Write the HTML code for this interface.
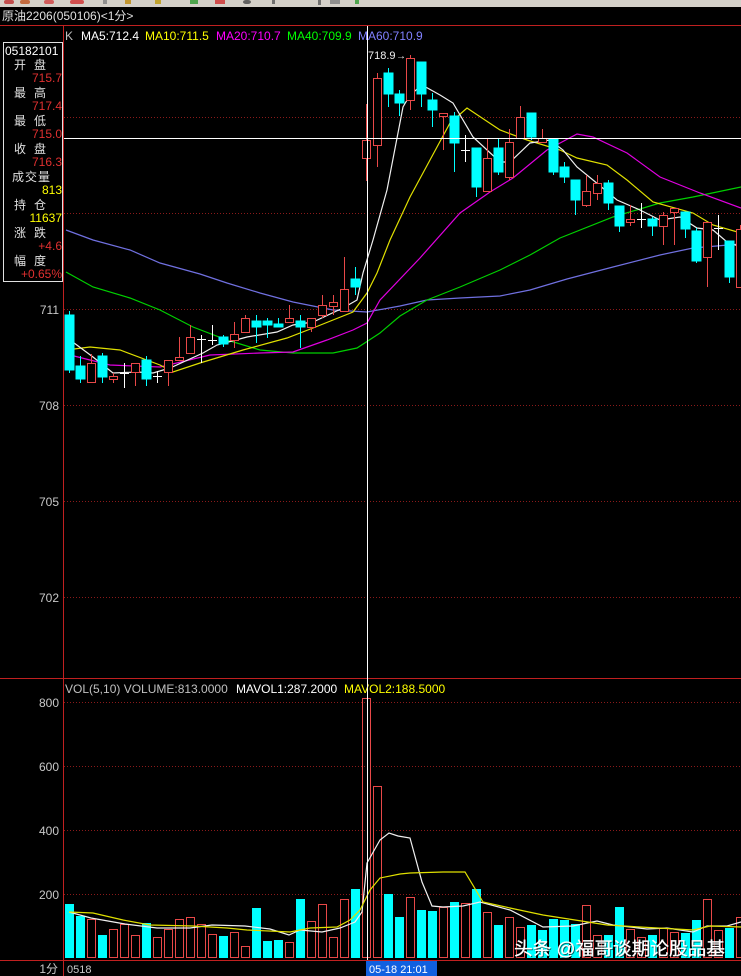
<!DOCTYPE html>
<html><head><meta charset="utf-8"><style>
html,body{margin:0;padding:0;background:#000;}
body{width:741px;height:976px;overflow:hidden;position:relative;font-family:"Liberation Sans","Noto Sans CJK SC",sans-serif;}
svg{position:absolute;left:0;top:0;}
text{font-family:"Liberation Sans","Noto Sans CJK SC",sans-serif;}
</style></head><body>
<svg width="741" height="976" viewBox="0 0 741 976" xmlns="http://www.w3.org/2000/svg">
<rect x="0" y="0" width="741" height="976" fill="#000"/>
<rect x="0" y="0" width="741" height="7" fill="#d4d0c8"/>
<g opacity="0.9">
<rect x="4" y="0" width="10" height="4" rx="2" fill="#c04040"/><rect x="20" y="0" width="10" height="4" rx="2" fill="#c06030"/>
<rect x="44" y="0" width="10" height="4" rx="2" fill="#d05050"/><rect x="70" y="0" width="14" height="4" rx="2" fill="#d04040"/>
<rect x="103" y="0" width="4" height="4" fill="#888"/><rect x="125" y="0" width="6" height="4" fill="#c09020"/>
<rect x="155" y="0" width="6" height="4" fill="#c0a020"/><rect x="190" y="0" width="8" height="4" fill="#40a040"/>
<rect x="215" y="0" width="10" height="4" fill="#d04040"/><rect x="243" y="0" width="8" height="4" rx="3" fill="#555"/>
<rect x="272" y="0" width="3" height="4" fill="#666"/><rect x="318" y="0" width="3" height="5" fill="#666"/>
<rect x="330" y="0" width="10" height="4" fill="#888"/><rect x="355" y="0" width="4" height="4" fill="#40a040"/>
</g>
<text x="2" y="20" fill="#e0e0e0" font-size="12">原油2206(050106)&lt;1分&gt;</text>
<line x1="0" y1="25.5" x2="741" y2="25.5" stroke="#c02020" stroke-width="1"/>
<line x1="63.5" y1="26" x2="63.5" y2="976" stroke="#c02020" stroke-width="1"/>
<line x1="0" y1="678.5" x2="741" y2="678.5" stroke="#c02020" stroke-width="1"/>
<line x1="0" y1="960.5" x2="741" y2="960.5" stroke="#c02020" stroke-width="1"/>
<g stroke="#8a1a1a" stroke-width="1" stroke-dasharray="1,2">
<line x1="64" y1="117.5" x2="741" y2="117.5"/><line x1="64" y1="213.5" x2="741" y2="213.5"/>
<line x1="64" y1="309.5" x2="741" y2="309.5"/><line x1="64" y1="405.5" x2="741" y2="405.5"/>
<line x1="64" y1="501.5" x2="741" y2="501.5"/><line x1="64" y1="597.5" x2="741" y2="597.5"/>
<line x1="64" y1="702.5" x2="741" y2="702.5"/><line x1="64" y1="766.5" x2="741" y2="766.5"/>
<line x1="64" y1="830.5" x2="741" y2="830.5"/><line x1="64" y1="894.5" x2="741" y2="894.5"/>
</g>
<g fill="#c8c8c8" font-size="12" text-anchor="end">
<text x="59" y="314">711</text><text x="59" y="410">708</text><text x="59" y="506">705</text><text x="59" y="602">702</text>
<text x="59" y="707">800</text><text x="59" y="771">600</text><text x="59" y="835">400</text><text x="59" y="899">200</text>
</g>
<g font-size="12">
<text x="65" y="40" fill="#c0c0c0">K</text>
<text x="81" y="40" fill="#ffffff">MA5:712.4</text>
<text x="145" y="40" fill="#ffff00">MA10:711.5</text>
<text x="216" y="40" fill="#ff00ff">MA20:710.7</text>
<text x="287" y="40" fill="#00ff00">MA40:709.9</text>
<text x="358" y="40" fill="#8080ff">MA60:710.9</text>
</g>
<g font-size="12">
<text x="65" y="693" fill="#c0c0c0">VOL(5,10) VOLUME:813.0000</text>
<text x="236" y="693" fill="#ffffff">MAVOL1:287.2000</text>
<text x="344" y="693" fill="#ffff00">MAVOL2:188.5000</text>
</g>
<rect x="3.5" y="42.5" width="59" height="239" fill="#000" stroke="#e0e0e0" stroke-width="1"/>
<g font-size="12">
<text x="5" y="55" fill="#ffffff">05182101</text>
<text x="14" y="69" fill="#e0e0e0" letter-spacing="8">开盘</text>
<text x="62" y="82" fill="#e03030" text-anchor="end">715.7</text>
<text x="14" y="97" fill="#e0e0e0" letter-spacing="8">最高</text>
<text x="62" y="110" fill="#e03030" text-anchor="end">717.4</text>
<text x="14" y="125" fill="#e0e0e0" letter-spacing="8">最低</text>
<text x="62" y="138" fill="#e03030" text-anchor="end">715.0</text>
<text x="14" y="153" fill="#e0e0e0" letter-spacing="8">收盘</text>
<text x="62" y="166" fill="#e03030" text-anchor="end">716.3</text>
<text x="12" y="181" fill="#e0e0e0" letter-spacing="1">成交量</text>
<text x="62" y="194" fill="#ffff00" text-anchor="end">813</text>
<text x="14" y="209" fill="#e0e0e0" letter-spacing="8">持仓</text>
<text x="62" y="222" fill="#ffff00" text-anchor="end">11637</text>
<text x="14" y="237" fill="#e0e0e0" letter-spacing="8">涨跌</text>
<text x="62" y="250" fill="#e03030" text-anchor="end">+4.6</text>
<text x="14" y="265" fill="#e0e0e0" letter-spacing="8">幅度</text>
<text x="62" y="278" fill="#e03030" text-anchor="end">+0.65%</text>
</g>
<g fill="none" stroke-width="1.2">
<polyline stroke="#7070e0" points="66,230 93,240 130,250 160,263 200,274 227,283 260,293 293,302 333,310 367,312 400,306 427,300 460,298 500,296 530,290 567,279 613,267 660,255 693,248 740,244"/>
<polyline stroke="#00d000" points="66,272 93,287 130,298 160,310 193,327 227,340 260,350 293,353 333,353 357,348 380,333 400,316 427,300 460,287 500,270 530,255 560,238 613,217 660,203 693,197 741,187"/>
<polyline stroke="#e000e0" points="66,354 110,365 160,367 210,355 260,353 293,352 327,340 353,330 367,323 380,300 420,258 460,213 490,192 513,178 547,150 577,134 593,137 627,153 660,177 700,193 741,208"/>
<polyline stroke="#e0e000" points="66,350 90,347 120,350 160,365 173,372 200,363 243,350 287,338 313,328 353,312 367,293 377,273 390,240 410,197 430,160 450,123 467,108 500,130 527,140 560,150 577,158 607,165 627,180 653,202 693,213 713,225 741,233"/>
<polyline stroke="#f0f0f0" points="66,337 93,357 113,373 137,372 153,373 170,368 203,353 217,345 247,337 277,332 293,325 313,322 343,308 357,300 363,273 373,240 387,190 403,107 410,95 422,85 440,95 453,103 473,137 500,162 510,162 530,143 550,140 563,150 577,167 593,180 617,200 640,210 660,220 680,217 697,228 713,230 727,242 741,247"/>
</g>
<g stroke-width="1" shape-rendering="crispEdges">
<g stroke="#00ffff" fill="#00ffff">
<line x1="69.5" y1="311" x2="69.5" y2="373"/><rect x="65" y="315" width="9" height="55"/>
<line x1="80.5" y1="356" x2="80.5" y2="383"/><rect x="76" y="366" width="9" height="13"/>
<line x1="102.5" y1="353" x2="102.5" y2="383"/><rect x="98" y="356" width="9" height="21"/>
<line x1="146.5" y1="356" x2="146.5" y2="386"/><rect x="142" y="360" width="9" height="19"/>
<line x1="223.5" y1="335" x2="223.5" y2="347"/><rect x="219" y="337" width="9" height="7"/>
<line x1="256.5" y1="315" x2="256.5" y2="343"/><rect x="252" y="321" width="9" height="6"/>
<line x1="267.5" y1="318" x2="267.5" y2="338"/><rect x="263" y="321" width="9" height="4"/>
<line x1="278.5" y1="318" x2="278.5" y2="327"/><rect x="274" y="324" width="9" height="3"/>
<line x1="300.5" y1="315" x2="300.5" y2="348"/><rect x="296" y="321" width="9" height="6"/>
<line x1="355.5" y1="267" x2="355.5" y2="295"/><rect x="351" y="279" width="9" height="8"/>
<line x1="388.5" y1="68" x2="388.5" y2="107"/><rect x="384" y="73" width="9" height="21"/>
<line x1="399.5" y1="90" x2="399.5" y2="116"/><rect x="395" y="94" width="9" height="9"/>
<line x1="421.5" y1="62" x2="421.5" y2="107"/><rect x="417" y="62" width="9" height="32"/>
<line x1="432.5" y1="93" x2="432.5" y2="127"/><rect x="428" y="100" width="9" height="10"/>
<line x1="454.5" y1="112" x2="454.5" y2="172"/><rect x="450" y="116" width="9" height="27"/>
<line x1="476.5" y1="148" x2="476.5" y2="197"/><rect x="472" y="148" width="9" height="39"/>
<line x1="498.5" y1="138" x2="498.5" y2="175"/><rect x="494" y="148" width="9" height="24"/>
<line x1="531.5" y1="113" x2="531.5" y2="140"/><rect x="527" y="113" width="9" height="24"/>
<line x1="553.5" y1="139" x2="553.5" y2="175"/><rect x="549" y="139" width="9" height="33"/>
<line x1="564.5" y1="162" x2="564.5" y2="183"/><rect x="560" y="167" width="9" height="10"/>
<line x1="575.5" y1="180" x2="575.5" y2="215"/><rect x="571" y="180" width="9" height="20"/>
<line x1="608.5" y1="180" x2="608.5" y2="210"/><rect x="604" y="183" width="9" height="20"/>
<line x1="619.5" y1="206" x2="619.5" y2="232"/><rect x="615" y="206" width="9" height="20"/>
<line x1="652.5" y1="217" x2="652.5" y2="236"/><rect x="648" y="219" width="9" height="7"/>
<line x1="685.5" y1="212" x2="685.5" y2="238"/><rect x="681" y="212" width="9" height="17"/>
<line x1="696.5" y1="228" x2="696.5" y2="263"/><rect x="692" y="231" width="9" height="30"/>
<line x1="729.5" y1="241" x2="729.5" y2="283"/><rect x="725" y="241" width="9" height="36"/>
</g>
<g stroke="#e84848" fill="#000">
<line x1="91.5" y1="354" x2="91.5" y2="383"/><rect x="87.5" y="363.5" width="8" height="19"/>
<line x1="113.5" y1="373" x2="113.5" y2="383"/><rect x="109.5" y="376.5" width="8" height="3"/>
<line x1="135.5" y1="363" x2="135.5" y2="386"/><rect x="131.5" y="363.5" width="8" height="9"/>
<line x1="168.5" y1="360" x2="168.5" y2="386"/><rect x="164.5" y="360.5" width="8" height="12"/>
<line x1="179.5" y1="337" x2="179.5" y2="360"/><rect x="175.5" y="357.5" width="8" height="3"/>
<line x1="190.5" y1="325" x2="190.5" y2="353"/><rect x="186.5" y="337.5" width="8" height="16"/>
<line x1="234.5" y1="322" x2="234.5" y2="348"/><rect x="230.5" y="334.5" width="8" height="6"/>
<line x1="245.5" y1="315" x2="245.5" y2="332"/><rect x="241.5" y="318.5" width="8" height="14"/>
<line x1="289.5" y1="305" x2="289.5" y2="322"/><rect x="285.5" y="318.5" width="8" height="4"/>
<line x1="311.5" y1="318" x2="311.5" y2="332"/><rect x="307.5" y="318.5" width="8" height="9"/>
<line x1="322.5" y1="295" x2="322.5" y2="318"/><rect x="318.5" y="305.5" width="8" height="10"/>
<line x1="333.5" y1="295" x2="333.5" y2="315"/><rect x="329.5" y="302.5" width="8" height="4"/>
<line x1="344.5" y1="257" x2="344.5" y2="311"/><rect x="340.5" y="289.5" width="8" height="22"/>
<line x1="366.5" y1="104" x2="366.5" y2="181"/><rect x="362.5" y="140.5" width="8" height="18"/>
<line x1="377.5" y1="73" x2="377.5" y2="167"/><rect x="373.5" y="78.5" width="8" height="67"/>
<line x1="410.5" y1="55" x2="410.5" y2="110"/><rect x="406.5" y="58.5" width="8" height="42"/>
<line x1="443.5" y1="113" x2="443.5" y2="150"/><rect x="439.5" y="113.5" width="8" height="3"/>
<line x1="487.5" y1="138" x2="487.5" y2="191"/><rect x="483.5" y="158.5" width="8" height="33"/>
<line x1="509.5" y1="129" x2="509.5" y2="180"/><rect x="505.5" y="142.5" width="8" height="35"/>
<line x1="520.5" y1="106" x2="520.5" y2="138"/><rect x="516.5" y="117.5" width="8" height="21"/>
<line x1="542.5" y1="129" x2="542.5" y2="142"/><rect x="538.5" y="138.5" width="8" height="4"/>
<line x1="586.5" y1="175" x2="586.5" y2="207"/><rect x="582.5" y="191.5" width="8" height="14"/>
<line x1="597.5" y1="175" x2="597.5" y2="200"/><rect x="593.5" y="183.5" width="8" height="10"/>
<line x1="630.5" y1="205" x2="630.5" y2="226"/><rect x="626.5" y="219.5" width="8" height="3"/>
<line x1="663.5" y1="212" x2="663.5" y2="245"/><rect x="659.5" y="215.5" width="8" height="11"/>
<line x1="674.5" y1="208" x2="674.5" y2="245"/><rect x="670.5" y="208.5" width="8" height="4"/>
<line x1="707.5" y1="222" x2="707.5" y2="287"/><rect x="703.5" y="222.5" width="8" height="35"/>
<line x1="740.5" y1="225" x2="740.5" y2="287"/><rect x="736.5" y="229.5" width="8" height="58"/>
</g>
<g stroke="#ffffff">
<line x1="124.5" y1="363" x2="124.5" y2="388"/><line x1="120" y1="373.5" x2="129" y2="373.5"/>
<line x1="157.5" y1="371" x2="157.5" y2="383"/><line x1="153" y1="376.5" x2="162" y2="376.5"/>
<line x1="201.5" y1="335" x2="201.5" y2="363"/><line x1="197" y1="339.5" x2="206" y2="339.5"/>
<line x1="212.5" y1="325" x2="212.5" y2="345"/><line x1="208" y1="340.5" x2="217" y2="340.5"/>
<line x1="465.5" y1="135" x2="465.5" y2="162"/><line x1="461" y1="150.5" x2="470" y2="150.5"/>
<line x1="641.5" y1="203" x2="641.5" y2="228"/><line x1="637" y1="219.5" x2="646" y2="219.5"/>
<line x1="718.5" y1="215" x2="718.5" y2="250"/><line x1="714" y1="228.5" x2="723" y2="228.5"/>
</g>
</g>
<text x="368" y="59" fill="#f0f0f0" font-size="11">718.9</text>
<text x="396" y="59" fill="#f0f0f0" font-size="10">→</text>
<g shape-rendering="crispEdges">
<g fill="#00ffff">
<rect x="65" y="904" width="9" height="54"/><rect x="76" y="916" width="9" height="42"/>
<rect x="98" y="935" width="9" height="23"/><rect x="142" y="923" width="9" height="35"/>
<rect x="219" y="936" width="9" height="22"/><rect x="252" y="908" width="9" height="50"/>
<rect x="263" y="941" width="9" height="17"/><rect x="274" y="940" width="9" height="18"/>
<rect x="296" y="899" width="9" height="59"/><rect x="351" y="889" width="9" height="69"/>
<rect x="384" y="894" width="9" height="64"/><rect x="395" y="917" width="9" height="41"/>
<rect x="417" y="910" width="9" height="48"/><rect x="428" y="911" width="9" height="47"/>
<rect x="450" y="902" width="9" height="56"/><rect x="472" y="889" width="9" height="69"/>
<rect x="494" y="925" width="9" height="33"/><rect x="527" y="925" width="9" height="33"/>
<rect x="538" y="930" width="9" height="28"/><rect x="549" y="919" width="9" height="39"/>
<rect x="560" y="920" width="9" height="38"/><rect x="571" y="924" width="9" height="34"/>
<rect x="604" y="935" width="9" height="23"/><rect x="615" y="907" width="9" height="51"/>
<rect x="648" y="935" width="9" height="23"/><rect x="681" y="933" width="9" height="25"/>
<rect x="692" y="920" width="9" height="38"/><rect x="725" y="928" width="9" height="30"/>
</g>
<g fill="none" stroke="#e84848">
<rect x="87.5" y="919.5" width="8" height="38"/><rect x="109.5" y="929.5" width="8" height="28"/>
<rect x="120.5" y="924.5" width="8" height="33"/><rect x="131.5" y="935.5" width="8" height="22"/>
<rect x="153.5" y="937.5" width="8" height="20"/><rect x="164.5" y="929.5" width="8" height="28"/>
<rect x="175.5" y="919.5" width="8" height="38"/><rect x="186.5" y="917.5" width="8" height="40"/>
<rect x="197.5" y="924.5" width="8" height="33"/><rect x="208.5" y="934.5" width="8" height="23"/>
<rect x="230.5" y="932.5" width="8" height="25"/><rect x="241.5" y="946.5" width="8" height="11"/>
<rect x="285.5" y="942.5" width="8" height="15"/><rect x="307.5" y="921.5" width="8" height="36"/>
<rect x="318.5" y="904.5" width="8" height="53"/><rect x="329.5" y="937.5" width="8" height="20"/>
<rect x="340.5" y="899.5" width="8" height="58"/><rect x="362.5" y="698.5" width="8" height="259"/>
<rect x="373.5" y="786.5" width="8" height="171"/><rect x="406.5" y="897.5" width="8" height="60"/>
<rect x="439.5" y="907.5" width="8" height="50"/><rect x="461.5" y="903.5" width="8" height="54"/>
<rect x="483.5" y="912.5" width="8" height="45"/><rect x="505.5" y="917.5" width="8" height="40"/>
<rect x="516.5" y="927.5" width="8" height="30"/><rect x="582.5" y="905.5" width="8" height="52"/>
<rect x="593.5" y="935.5" width="8" height="22"/><rect x="626.5" y="929.5" width="8" height="28"/>
<rect x="637.5" y="937.5" width="8" height="20"/><rect x="659.5" y="928.5" width="8" height="29"/>
<rect x="670.5" y="932.5" width="8" height="25"/><rect x="703.5" y="899.5" width="8" height="58"/>
<rect x="714.5" y="930.5" width="8" height="27"/><rect x="736.5" y="917.5" width="8" height="40"/>
</g>
</g>
<g fill="none" stroke-width="1.2">
<polyline stroke="#f0f0f0" points="69,912 91,918 125,924 157,928 190,928 212,925 245,926 270,929 289,935 300,930 322,932 340,928 355,922 362,912 367,863 380,840 389,833 398,836 410,838 422,882 432,906 443,907 463,906 480,902 510,910 543,927 573,926 597,921 613,925 647,929 667,928 693,932 707,926 727,926 741,922"/>
<polyline stroke="#e0e000" points="69,912 93,913 123,920 150,925 193,926 227,928 247,930 290,932 310,928 337,927 350,920 360,910 370,890 380,878 400,874 410,873 443,872 465,872 483,902 510,908 543,915 607,925 640,927 693,930 710,926 741,927"/>
</g>
<line x1="367.5" y1="26" x2="367.5" y2="960" stroke="#ffffff" stroke-width="1"/>
<line x1="64" y1="138.5" x2="741" y2="138.5" stroke="#ffffff" stroke-width="1"/>
<text x="58" y="973" fill="#c8c8c8" font-size="12" text-anchor="end">1分</text>
<text x="67" y="973" fill="#c8c8c8" font-size="11">0518</text>
<rect x="366" y="961" width="71" height="15" fill="#1060e0"/>
<text x="369" y="973" fill="#ffffff" font-size="11">05-18 21:01</text>
<text x="514" y="955" fill="#000" opacity="0.6" font-size="18" textLength="211" lengthAdjust="spacingAndGlyphs" transform="translate(1,1)">头条 @福哥谈期论股品基</text>
<text x="514" y="955" fill="#ffffff" stroke="#ffffff" stroke-width="0.3" font-size="18" textLength="211" lengthAdjust="spacingAndGlyphs">头条 @福哥谈期论股品基</text>
</svg>
</body></html>
